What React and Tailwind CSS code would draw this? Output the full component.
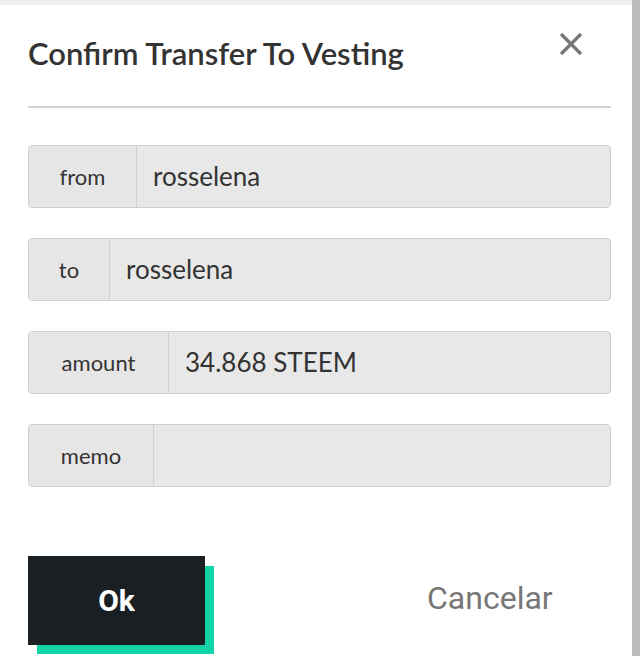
const rows = [
  { label: 'from', value: 'rosselena', w: 'w-[108px]' },
  { label: 'to', value: 'rosselena', w: 'w-[81px]' },
  { label: 'amount', value: '34.868 STEEM', w: 'w-[140px]' },
  { label: 'memo', value: '', w: 'w-[125px]' },
];

const Field = ({ label, value, w }) => (
  <div className="flex h-[63px] rounded-[4px] border border-[#cfcfcf] bg-[#e8e8e8] overflow-hidden">
    <div
      className={`${w} shrink-0 flex items-center justify-center border-r border-[#cfcfcf] bg-[#e6e6e6] text-[22px] text-[#333]`}
    >
      {label}
    </div>
    <div className="flex-1 flex items-center px-4 text-[26px] text-[#333]">{value}</div>
  </div>
);

export default function App() {
  return (
    <div className="w-[640px] h-[656px] bg-[#bdbdbd] flex flex-col overflow-hidden font-['Lato',sans-serif]">
      <div className="h-[5px] shrink-0 bg-[#efefef] mr-[8px]" />
      <div className="flex-1 mr-[8px] bg-white pl-[28px] pr-[21px] flex flex-col">
        <div className="flex items-start justify-between pt-[30px]">
          <h1 className="text-[31px] font-semibold text-[#333] leading-[36px]">Confirm Transfer To Vesting</h1>
          <button className="mr-[28px] mt-[-3px] text-[#777]" aria-label="Close">
            <svg width="24" height="24" viewBox="0 0 24 24">
              <path d="M2 2 L22 22 M22 2 L2 22" stroke="currentColor" strokeWidth="3.2" />
            </svg>
          </button>
        </div>
        <div className="mt-[35px] h-[2px] bg-[#d2d2d2]" />
        <div className="mt-[37px] flex flex-col gap-[30px]">
          {rows.map((r) => (
            <Field key={r.label} {...r} />
          ))}
        </div>
        <div className="mt-[69px] flex items-center">
          <div className="relative w-[186px] h-[98px]">
            <div className="absolute left-[9px] top-[10px] w-[177px] h-[88px] bg-[#10d3a8]" />
            <button className="absolute left-0 top-0 w-[177px] h-[89px] bg-[#1a1f24] text-white text-[30px] font-bold font-['Roboto',sans-serif]">
              Ok
            </button>
          </div>
          <button className="ml-[213px] mt-[-14px] text-[32px] text-[#777] font-['Roboto',sans-serif]">
            Cancelar
          </button>
        </div>
      </div>
    </div>
  );
}
